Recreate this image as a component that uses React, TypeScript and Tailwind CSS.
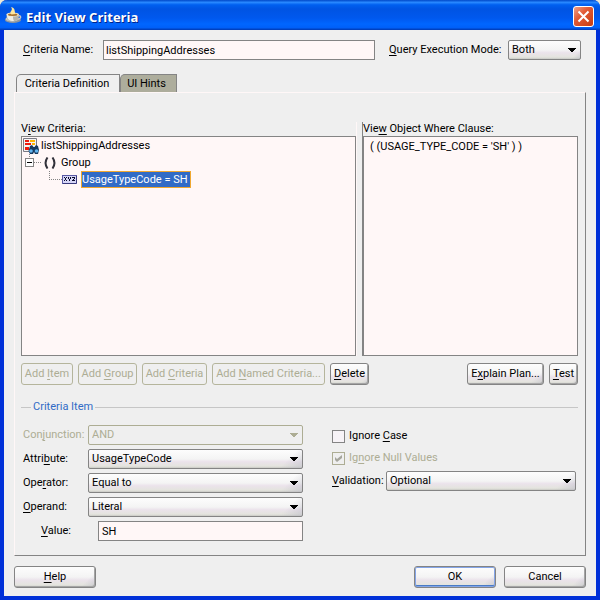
import { useState } from 'react'
import type { ReactNode } from 'react'

function Key({ children }: { children: ReactNode }) {
    return <span className="underline decoration-1 underline-offset-2 [text-decoration-skip-ink:none]">{children}</span>
}

interface ButtonProps {
    children: ReactNode
    className?: string
    disabled?: boolean
    isDefault?: boolean
}

function Button({ children, className = '', disabled = false, isDefault = false }: ButtonProps) {
    const look = disabled
        ? 'border-[#b5b59c] text-[#adad94]'
        : 'border-[#848484] bg-[linear-gradient(135deg,transparent_85%,#b8b8c488),linear-gradient(#fdfdfd,#f4f4f4_50%,#ebe3eb_65%,#e4e4de_90%,#c8c8c4)]'
    const ring = disabled
        ? ''
        : isDefault
            ? 'shadow-[inset_0_0_0_1px_#84a5e7,inset_0_-2px_#4a7bc6]'
            : 'shadow-[inset_-1px_-1px_#a5a5a5]'
    return (
        <button
            type="button"
            disabled={disabled}
            className={`h-[22px] whitespace-nowrap rounded-[3px] border ${look} ${ring} ${className}`}
        >
            {children}
        </button>
    )
}

interface SelectProps {
    id: string
    options: string[]
    disabled?: boolean
    className?: string
}

function Select({ id, options, disabled = false, className = '' }: SelectProps) {
    const look = disabled
        ? 'border-[#adad94] text-[#adad94] opacity-100'
        : 'border-[#848484] bg-[linear-gradient(135deg,transparent_90%,#b8b8c488),linear-gradient(#fdfdfd,#f4f4f4_50%,#ebe3eb_65%,#e4e4de_90%,#c8c8c4)]'
    return (
        <div className={`relative ${className}`}>
            <select
                id={id}
                disabled={disabled}
                className={`block h-5 w-full appearance-none rounded-[2px] border pl-[3px] pr-5 ${look}`}
            >
                {options.map((option) => (
                    <option key={option}>{option}</option>
                ))}
            </select>
            <svg
                className={`pointer-events-none absolute right-[5px] top-2 ${disabled ? 'text-[#adad94]' : 'text-black'}`}
                width="8"
                height="4"
                viewBox="0 0 8 4"
                fill="currentColor"
                shapeRendering="crispEdges"
            >
                <path d="M0 0h8v1H7v1H6v1H5v1H3V3H2V2H1V1H0z" />
            </svg>
        </div>
    )
}

function CupIcon() {
    return (
        <svg width="18" height="18" viewBox="0 0 18 18">
            <ellipse cx="8" cy="14" rx="8" ry="3" fill="#8d949c" />
            <ellipse cx="7" cy="13" rx="6.500" ry="2.500" fill="#c4c8cc" />
            <path d="M13 10c3.500-1 3.500 2.500 0 3" fill="none" stroke="#c8c8c8" strokeWidth="1.400" />
            <path d="M1.500 8.500h12.500c0 5-2 7-6.500 7s-6-2-6-7z" fill="#b5b5ad" />
            <path d="M2 9h6c0 3 0 4 1 6-5 0-7-2-7-6z" fill="#efefe8" />
            <ellipse cx="7.700" cy="8.500" rx="6.300" ry="2" fill="#efe7ce" />
            <ellipse cx="7.700" cy="8.700" rx="4.800" ry="1.200" fill="#a8702c" />
            <path d="M6.500 8.500C3 5.500 9 5 6 1c5 1.500 3 4 4.500 7z" fill="#ffe79c" />
        </svg>
    )
}

function CriteriaIcon() {
    return (
        <svg width="16" height="16" viewBox="0 0 16 16">
            <path d="M.5.500h13v13H.5z" fill="#f4f4f4" stroke="#7b7b84" />
            <path d="M2 2h4v2H2zM2 5h6v2H2zM2 9h4v3H2z" fill="#ee1c10" />
            <path d="M7 2h5v2H7zM9 5h3v2H9z" fill="#ffb400" />
            <path d="M7 8l2-1 1.500 2h1L13 7l2 1 1 4-1 4h-3l-1-2-1 2H7l-1.500-3z" fill="#16395f" />
            <circle cx="8" cy="13" r="1.800" fill="#63b5ef" />
            <circle cx="13.500" cy="13" r="1.800" fill="#63b5ef" />
        </svg>
    )
}

function AttributeIcon() {
    return (
        <svg width="15" height="9" viewBox="0 0 15 9" shapeRendering="crispEdges">
            <rect x=".5" y=".5" width="14" height="8" rx="1" fill="#d6d6f7" stroke="#5a5aa5" />
            <path d="M1 8.500h13M14.500 1v7" fill="none" stroke="#39397b" />
            <path
                d="M2 2h1v1H2zM4 2h1v1H4zM3 3h1v2H3zM2 5h1v1H2zM4 5h1v1H4zM6 2h1v2H6zM8 2h1v2H8zM7 4h1v2H7zM10 2h3v1h-3zM12 3h1v1h-1zM11 4h1v1h-1zM10 5h3v1h-3z"
                fill="#08082a"
            />
        </svg>
    )
}

function Tree() {
    return (
        <ul role="tree" aria-labelledby="tree-label" className="flex-1 border border-[#848484] bg-[#fff7f7] leading-[17px]">
            <li role="treeitem">
                <div className="flex h-[17px] items-center gap-0.5 pl-px">
                    <CriteriaIcon />
                    listShippingAddresses
                </div>
                <ul role="group">
                    <li role="treeitem" aria-expanded="true">
                        <div className="flex h-[17px] items-center pl-[3px]">
                            <svg width="16" height="17" viewBox="0 0 16 17" fill="none" shapeRendering="crispEdges">
                                <path d="M4.500 0v4M9 8.500h7" stroke="#848484" strokeDasharray="1 1" />
                                <path d="M.5 4.500h8v8h-8z" fill="#fff" stroke="#848484" />
                                <path d="M2 8.500h5" stroke="#000" />
                            </svg>
                            <svg className="ml-0.5" width="14" height="12" viewBox="0 0 14 12" fill="none" stroke="#31313a" strokeWidth="2">
                                <path d="M4.500.500C2 4 2 8 4.500 11.500M9.500.500c2.500 3.500 2.500 7.500 0 11" />
                            </svg>
                            <span className="ml-1">Group</span>
                        </div>
                        <ul role="group">
                            <li role="treeitem" aria-selected="true" className="flex h-[17px] items-center pl-[27px]">
                                <svg width="13" height="17" viewBox="0 0 13 17" fill="none" shapeRendering="crispEdges">
                                    <path d="M.5 0v8.500H13" stroke="#848484" strokeDasharray="1 1" />
                                </svg>
                                <AttributeIcon />
                                <span className="ml-1 h-[17px] border border-[#f0a830] bg-[#316bc6] pr-0.5 leading-[15px] text-white">
                                    UsageTypeCode = SH
                                </span>
                            </li>
                        </ul>
                    </li>
                </ul>
            </li>
        </ul>
    )
}

export default function App() {
    const [name, setName] = useState('listShippingAddresses')
    const [value, setValue] = useState('SH')

    return (
        <div className="min-h-screen bg-[#ece9d8] font-['Roboto','Noto_Sans',sans-serif] text-[11px] leading-[14px] text-black">
            <div className="flex min-h-screen flex-col rounded-t-[7px] border-x-4 border-b-4 border-[#0030d8] bg-[#efefef]">
                {/* Title bar */}
                <header className="-mx-1 flex h-[30px] shrink-0 items-center rounded-t-[7px] bg-[linear-gradient(#0048c8,#2888ff_8%,#0060f0_16%,#0054e3_30%,#0058ee_60%,#0066ff_80%,#0060f8_92%,#0038b0)] pl-[5px] pr-[6px]">
                    <CupIcon />
                    <h1 className="ml-[3px] mt-1 flex-1 font-['Open_Sans',sans-serif] text-[13px] font-bold text-white [text-shadow:1px_1px_#00248c]">
                        Edit View Criteria
                    </h1>
                    <button
                        type="button"
                        aria-label="Close"
                        className="mt-[3px] flex h-[21px] w-[21px] items-center justify-center rounded-[3px] border border-white bg-[linear-gradient(135deg,#f0a088,#e25a35_40%,#c63c10)]"
                    >
                        <svg width="13" height="13" viewBox="0 0 13 13" stroke="#fff" strokeWidth="2">
                            <path d="M1.500 1.500l10 10M11.500 1.500l-10 10" />
                        </svg>
                    </button>
                </header>

                <main className="flex flex-1 flex-col px-[10px] pb-2 pt-[10px]">
                    <div className="flex items-center pl-[9px] pr-[5px]">
                        <label htmlFor="name" className="w-20"><Key>C</Key>riteria Name:</label>
                        <input
                            id="name"
                            value={name}
                            onChange={(e) => setName(e.target.value)}
                            className="h-5 min-w-0 flex-1 border border-[#848484] bg-[#fff7f7] px-0.5"
                        />
                        <label htmlFor="mode" className="ml-[14px] w-[119px] whitespace-nowrap"><Key>Q</Key>uery Execution Mode:</label>
                        <Select id="mode" options={['Both', 'Database', 'In Memory']} className="w-[73px]" />
                    </div>

                    {/* Tabs */}
                    <div role="tablist" className="mt-[14px] flex items-end pl-0.5">
                        <button
                            type="button"
                            role="tab"
                            aria-selected="true"
                            className="-mb-px h-[19px] w-[104px] rounded-tl-[5px] border border-b-0 border-[#848484] bg-[#efefef] pr-0.5"
                        >
                            Criteria Definition
                        </button>
                        <button
                            type="button"
                            role="tab"
                            aria-selected="false"
                            className="h-[18px] w-[57px] rounded-tl-[5px] border border-b-0 border-[#848484] bg-[#adad9c] pr-1"
                        >
                            UI Hints
                        </button>
                    </div>

                    <section className="flex flex-1 flex-col border border-b-[#848484] border-l-[#fff7f7] border-r-[#848484] border-t-[#fff7f7] pb-[14px] pl-[6px] pr-[7px] pt-[29px]">
                        <div className="grid flex-1 grid-cols-[336fr_216fr] gap-[5px]">
                            <div className="flex flex-col border-r border-[#fff7f7]">
                                <div id="tree-label">V<Key>i</Key>ew Criteria:</div>
                                <Tree />
                            </div>
                            <div className="flex flex-col border-l border-[#848484]">
                                <label htmlFor="clause">Vie<Key>w</Key> Object Where Clause:</label>
                                <textarea
                                    id="clause"
                                    readOnly
                                    value="( (USAGE_TYPE_CODE = 'SH' ) )"
                                    className="flex-1 resize-none border border-[#848484] bg-[#fff7f7] px-[6px] py-[3px]"
                                />
                            </div>
                        </div>

                        <div className="mt-[7px] flex gap-[5px]">
                            <Button disabled className="w-[52px]">Add <Key>I</Key>tem</Button>
                            <Button disabled className="w-[59px]">Add <Key>G</Key>roup</Button>
                            <Button disabled className="w-[65px]">Add <Key>C</Key>riteria</Button>
                            <Button disabled className="w-[113px]">Add <Key>N</Key>amed Criteria...</Button>
                            <Button className="w-[39px]"><Key>D</Key>elete</Button>
                            <Button className="ml-auto w-[77px]">E<Key>x</Key>plain Plan...</Button>
                            <Button className="w-[29px]"><Key>T</Key>est</Button>
                        </div>

                        <fieldset className="mt-[15px] border-t border-[#c6c6c6] pt-[11px]">
                            <legend className="ml-[10px] px-0.5 text-[#316bc6]">Criteria Item</legend>
                            <div className="grid grid-cols-[282fr_244fr] gap-[29px] pr-0.5">
                                <div className="flex flex-col gap-1">
                                    <div className="flex items-center pl-0.5">
                                        <label htmlFor="conjunction" className="w-[65px] text-[#adad94]">Con<Key>j</Key>unction:</label>
                                        <Select id="conjunction" options={['AND', 'OR']} disabled className="flex-1" />
                                    </div>
                                    <div className="flex items-center pl-0.5">
                                        <label htmlFor="attribute" className="w-[65px]">Attri<Key>b</Key>ute:</label>
                                        <Select id="attribute" options={['UsageTypeCode']} className="flex-1" />
                                    </div>
                                    <div className="flex items-center pl-0.5">
                                        <label htmlFor="operator" className="w-[65px]">Ope<Key>r</Key>ator:</label>
                                        <Select id="operator" options={['Equal to', 'Not equal to']} className="flex-1" />
                                    </div>
                                    <div className="flex items-center pl-0.5">
                                        <label htmlFor="operand" className="w-[65px]"><Key>O</Key>perand:</label>
                                        <Select id="operand" options={['Literal', 'Bind Variable']} className="flex-1" />
                                    </div>
                                    <div className="flex items-center pl-5">
                                        <label htmlFor="value" className="w-[57px]"><Key>V</Key>alue:</label>
                                        <input
                                            id="value"
                                            value={value}
                                            onChange={(e) => setValue(e.target.value)}
                                            className="h-5 min-w-0 flex-1 border border-[#848484] bg-[#fff7f7] px-[3px]"
                                        />
                                    </div>
                                </div>

                                <div className="pt-1">
                                    <label className="flex h-[14px] items-center gap-1">
                                        <input type="checkbox" className="h-[13px] w-[13px] appearance-none border border-[#848484] bg-[#f7f3f7]" />
                                        <span>Ignore <Key>C</Key>ase</span>
                                    </label>
                                    <label className="mt-2 flex h-[14px] items-center gap-1 text-[#adad94]">
                                        <span className="relative h-[13px] w-[13px]">
                                            <input type="checkbox" checked disabled readOnly className="block h-[13px] w-[13px] appearance-none border border-[#adad94]" />
                                            <svg className="absolute left-[3px] top-[3px]" width="7" height="7" viewBox="0 0 7 7" fill="#a5a59c">
                                                <path d="M0 2l2 2 5-4v3L2 7 0 5z" />
                                            </svg>
                                        </span>
                                        <span>Ig<Key>n</Key>ore Null Values</span>
                                    </label>
                                    <div className="mt-[6px] flex items-center">
                                        <label htmlFor="validation" className="w-[54px]"><Key>V</Key>alidation:</label>
                                        <Select id="validation" options={['Optional', 'Required']} className="flex-1" />
                                    </div>
                                </div>
                            </div>
                        </fieldset>
                    </section>

                    <footer className="mt-[10px] flex gap-2">
                        <Button className="w-[82px]"><Key>H</Key>elp</Button>
                        <Button isDefault className="ml-auto w-[82px]">OK</Button>
                        <Button className="w-[82px]">Cancel</Button>
                    </footer>
                </main>
            </div>
        </div>
    )
}
